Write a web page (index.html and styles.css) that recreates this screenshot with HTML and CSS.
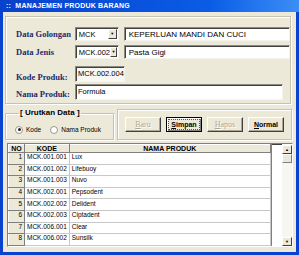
FILE: index.html
```html
<!DOCTYPE html>
<html lang="id">
<head>
    <meta charset="UTF-8">
    <title>Manajemen Produk Barang</title>
    <link rel="stylesheet" href="styles.css">
</head>
<body>
  <div class="window">
    <div class="titlebar">::&nbsp; MANAJEMEN PRODUK BARANG</div>
    <div class="frame">

      <div class="group form">
        <div class="row r1">
          <label class="lbl">Data Golongan</label>
          <div class="combo c1"><span class="val">MCK</span><span class="drop">&#9660;</span></div>
          <div class="field wide">KEPERLUAN MANDI DAN CUCI</div>
        </div>
        <div class="row r2">
          <label class="lbl">Data Jenis</label>
          <div class="combo c1"><span class="val">MCK.002</span><span class="drop">&#9660;</span></div>
          <div class="field wide">Pasta Gigi</div>
        </div>
        <div class="row r3">
          <label class="lbl">Kode Produk:</label>
          <div class="field code">MCK.002.004</div>
        </div>
        <div class="row r4">
          <label class="lbl">Nama Produk:</label>
          <div class="field name">Formula</div>
        </div>
      </div>

      <div class="middle">
        <fieldset class="group sort">
          <legend>[ Urutkan Data ]</legend>
          <label class="radio"><span class="dot on"></span>Kode</label>
          <label class="radio"><span class="dot"></span>Nama Produk</label>
        </fieldset>
        <div class="group buttons">
          <button type="button" class="btn" disabled><u>B</u>aru</button>
          <button type="button" class="btn default"><span class="focus"><u>S</u>impan</span></button>
          <button type="button" class="btn" disabled><u>H</u>apus</button>
          <button type="button" class="btn"><u>N</u>ormal</button>
        </div>
      </div>

      <div class="grid">
        <table>
          <tr>
            <th class="no">NO</th>
            <th class="kode">KODE</th>
            <th class="nama">NAMA PRODUK</th>
          </tr>
          <tr><td class="no">1</td><td>MCK.001.001</td><td>Lux</td></tr>
          <tr><td class="no">2</td><td>MCK.001.002</td><td>Lifebuoy</td></tr>
          <tr><td class="no">3</td><td>MCK.001.003</td><td>Nuvo</td></tr>
          <tr><td class="no">4</td><td>MCK.002.001</td><td>Pepsodent</td></tr>
          <tr><td class="no">5</td><td>MCK.002.002</td><td>Delident</td></tr>
          <tr><td class="no">6</td><td>MCK.002.003</td><td>Ciptadent</td></tr>
          <tr><td class="no">7</td><td>MCK.006.001</td><td>Clear</td></tr>
          <tr><td class="no">8</td><td>MCK.006.002</td><td>Sunsilk</td></tr>
        </table>
        <div class="blank"></div>
        <div class="scroll">
          <span class="arrow">&#9650;</span>
          <span class="thumb"></span>
          <span class="track"></span>
          <span class="arrow">&#9660;</span>
        </div>
      </div>

    </div>
  </div>
</body>
</html>
```

FILE: styles.css
```css
body {
    margin: 0;
    font-family: "Liberation Sans", Arial, sans-serif;
}

.window {
    width: 299px;
    height: 255px;
    display: flex;
    flex-direction: column;
    background: #ece9d8;
}

.titlebar {
    height: 12px;
    line-height: 12px;
    padding-left: 6px;
    font-size: 7px;
    font-weight: bold;
    color: #fff;
    letter-spacing: 0.2px;
    background: linear-gradient(to right, #0841cc, #0a5ce6 70%, #3b8ef5);
}

.frame {
    flex: 1;
    border: 3px solid #0842ce;
    border-top: 0;
    padding: 4px 0 0 2px;
    overflow: hidden;
}

.group {
    border: 1px solid #c5c2b2;
    box-shadow: 1px 1px 0 #fff, inset 1px 1px 0 #fff;
}

/* form */
.form {
    width: 286px;
    height: 88px;
    box-sizing: border-box;
    padding: 10px 0 0 10px;
}

.row {
    display: flex;
    align-items: center;
}

.r2 { margin-top: 4px; }
.r3 { margin-top: 7px; }
.r4 { margin-top: 2px; }

.lbl {
    width: 59px;
    font-family: "Liberation Serif", "Times New Roman", serif;
    font-weight: bold;
    font-size: 8.5px;
    color: #1c2a6c;
    white-space: nowrap;
}

.r3 .lbl {
    margin-top: 5px;
}

.r4 .lbl {
    margin-top: 3px;
}

.field,
.combo {
    box-sizing: border-box;
    background: #fff;
    border: 1px solid;
    border-color: #8c8a80 #f4f3ee #f4f3ee #8c8a80;
    box-shadow: inset 1px 1px 0 #404040;
    font-size: 7.5px;
    color: #000;
    white-space: nowrap;
}

.combo {
    width: 44px;
    height: 14px;
    display: flex;
    justify-content: space-between;
    padding: 2px 1px 0 3px;
}

.combo .val {
    line-height: 9px;
}

.drop {
    width: 9px;
    height: 10px;
    margin-top: -1px;
    box-sizing: border-box;
    background: #ece9d8;
    border: 1px solid;
    border-color: #fff #404040 #404040 #fff;
    font-size: 4px;
    line-height: 8px;
    text-align: center;
}

.wide {
    width: 167px;
    height: 14px;
    margin-left: 5px;
    padding: 2px 0 0 4px;
    font-size: 8px;
    line-height: 9px;
}

.code {
    width: 50px;
    height: 16px;
    padding: 2px 0 0 2px;
    background: #f7f7f3;
    line-height: 10px;
}

.name {
    width: 208px;
    height: 16px;
    padding: 2px 0 0 2px;
    line-height: 10px;
}

/* sort + buttons */
.middle {
    display: flex;
    margin-top: 5px;
    height: 31px;
}

.sort {
    margin: 0;
    width: 109px;
    box-sizing: border-box;
    padding: 3px 0 0 9px;
    display: flex;
    gap: 9px;
}

.sort legend {
    padding: 0 1px;
    margin-left: 4px;
    font-size: 8px;
    font-weight: bold;
    color: #000;
    line-height: 8px;
}

.radio {
    display: flex;
    align-items: center;
    font-size: 6.5px;
    color: #000;
}

.dot {
    width: 8px;
    height: 8px;
    box-sizing: border-box;
    margin-right: 3px;
    border-radius: 50%;
    border: 1px solid #9a988c;
    background: #fff;
    position: relative;
}

.dot.on::after {
    content: "";
    position: absolute;
    left: 1.5px;
    top: 1.5px;
    width: 3px;
    height: 3px;
    border-radius: 50%;
    background: #222;
}

.buttons {
    margin-left: 3px;
    width: 175px;
    box-sizing: border-box;
    display: flex;
    align-items: center;
    gap: 5px;
    padding: 0 0 0 7px;
}

.btn {
    width: 36px;
    height: 15px;
    box-sizing: border-box;
    padding: 0;
    font-family: "Liberation Sans", Arial, sans-serif;
    font-size: 7px;
    font-weight: bold;
    color: #000;
    background: #ece9d8;
    border: 1px solid;
    border-color: #fff #404040 #404040 #fff;
    box-shadow: inset -1px -1px 0 #aca899;
}

.btn:disabled {
    font-family: "Liberation Serif", "Times New Roman", serif;
    font-size: 8px;
    font-weight: normal;
    color: #aca899;
    text-shadow: 1px 1px 0 #fff;
}

.btn.default {
    border: 1px solid #000;
    box-shadow: inset 1px 1px 0 #fff, inset -1px -1px 0 #808080;
    padding: 2px;
}

.focus {
    display: block;
    height: 9px;
    line-height: 9px;
    outline: 1px dotted #555;
}

/* grid */
.grid {
    margin: 3px 0 0 2px;
    width: 286px;
    height: 104px;
    box-sizing: border-box;
    border: 1px solid;
    border-color: #808080 #fff #fff #808080;
    box-shadow: inset 1px 1px 0 #404040;
    background: #fff;
    display: flex;
    overflow: hidden;
}

table {
    border-collapse: collapse;
    font-size: 6.5px;
    color: #000;
    height: 0;
}

th,
td {
    border: 1px solid #c8c8c8;
    padding: 0 2px 2px;
    height: 8.6px;
    line-height: 8px;
    white-space: nowrap;
}

th {
    height: 7px;
    padding: 0 2px;
    line-height: 7px;
    background: #ece9d8;
    font-weight: bold;
    font-size: 7px;
    border-color: #fff #808080 #808080 #fff;
}

th.no { width: 11px; }
th.kode { width: 37px; }
th.nama { width: 196px; }

td.no {
    text-align: right;
    background: #ece9d8;
    border-color: #fff #808080 #808080 #fff;
}

.blank {
    flex: 1;
    border-left: 1px solid #808080;
}

.scroll {
    width: 10px;
    display: flex;
    flex-direction: column;
    background: #fff;
    padding-top: 1px;
}

.arrow {
    height: 9px;
    box-sizing: border-box;
    background: #ece9d8;
    border: 1px solid;
    border-color: #fff #404040 #404040 #fff;
    font-size: 4px;
    line-height: 7px;
    text-align: center;
}

.thumb {
    height: 9px;
    background: #ece9d8;
    box-sizing: border-box;
    border: 1px solid;
    border-color: #fff #808080 #808080 #fff;
}

.track {
    flex: 1;
    background: #f7f6f0;
}
```
